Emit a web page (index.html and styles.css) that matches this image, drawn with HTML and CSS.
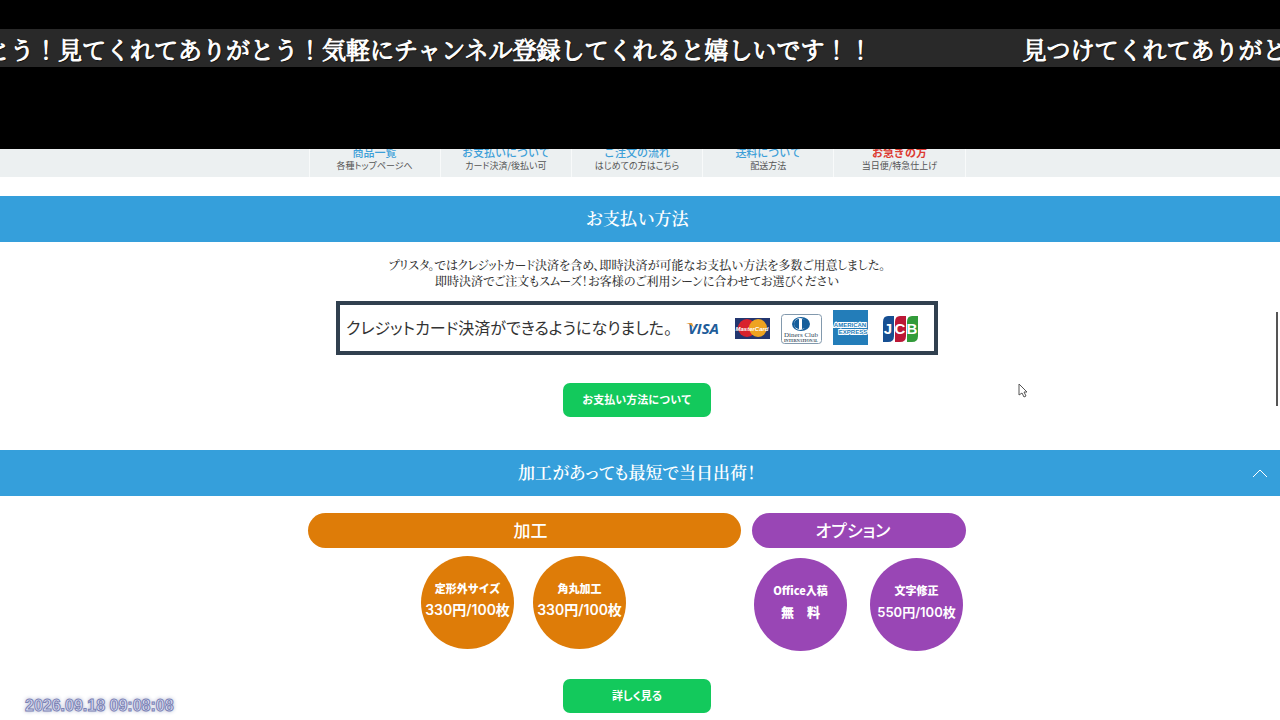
FILE: index.html
```html
<!DOCTYPE html>
<html lang="ja">
<head>
<meta charset="utf-8">
<meta name="viewport" content="width=device-width, initial-scale=1">
<title>お支払い方法</title>
<link rel="stylesheet" href="styles.css">
</head>
<body>
<header class="banner">
  <div class="ticker">
    <p class="ticker-text">見つけてくれてありがとう！見てくれてありがとう！気軽にチャンネル登録してくれると嬉しいです！！</p>
    <p class="ticker-text ticker-next">見つけてくれてありがとう！</p>
  </div>
</header>
<nav class="nav">
  <div class="nav-list">
    <a class="nav-item" href="#list"><span class="nav-title">商品一覧</span><span class="nav-sub">各種トップページへ</span></a>
    <a class="nav-item" href="#payment"><span class="nav-title">お支払いについて</span><span class="nav-sub">カード決済/後払い可</span></a>
    <a class="nav-item" href="#flow"><span class="nav-title">ご注文の流れ</span><span class="nav-sub">はじめての方はこちら</span></a>
    <a class="nav-item" href="#shipping"><span class="nav-title">送料について</span><span class="nav-sub">配送方法</span></a>
    <a class="nav-item" href="#urgent"><span class="nav-title urgent">お急ぎの方</span><span class="nav-sub">当日便/特急仕上げ</span></a>
  </div>
</nav>
<main>
  <section class="section" id="payment">
    <h2 class="band">お支払い方法</h2>
    <div class="section-body">
      <p class="lead">プリスタ。ではクレジットカード決済を含め、即時決済が可能なお支払い方法を多数ご用意しました。<br>即時決済でご注文もスムーズ！お客様のご利用シーンに合わせてお選びください</p>
      <div class="cards">
        <p class="cards-text">クレジットカード決済ができるようになりました。</p>
        <svg class="brands" viewBox="685 306 236 44" role="img" aria-label="VISA MasterCard Diners Club American Express JCB">
          <text x="688" y="334" class="logo visa">VISA</text>
          <path d="M686 323h6l2 5q-3-4-8-5z" fill="#e39b35"/>
          <rect x="735" y="318" width="35" height="21" fill="#23366f"/>
          <circle cx="747" cy="328" r="9" fill="#d8232d"/>
          <circle cx="758" cy="328" r="9" fill="#eea321"/>
          <text x="752" y="331" class="logo master">MasterCard</text>
          <rect x="781.500" y="314.500" width="40" height="29" rx="3" fill="#fff" stroke="#8299ad"/>
          <ellipse cx="801" cy="324" rx="9" ry="7" fill="#155e9b"/>
          <circle cx="800" cy="324" r="6" fill="#fff"/>
          <path d="M799 319a5 5 0 0 0 0 10z M802 319a5 5 0 0 1 0 10z" fill="#155e9b"/>
          <text x="801" y="337" class="logo diners">Diners Club</text>
          <text x="801" y="342" class="logo international">INTERNATIONAL</text>
          <rect x="833" y="310" width="35" height="35" fill="#237db9"/>
          <text x="850" y="327" class="logo amex">AMERICAN</text>
          <text x="853" y="334" class="logo amex">EXPRESS</text>
          <path d="M888 316h6v20q0 6-6 6h-5v-20q0-6 5-6z" fill="#164f92"/>
          <path d="M900 316h6v20q0 6-6 6h-5v-20q0-6 5-6z" fill="#bb1836"/>
          <path d="M912 316h6v20q0 6-6 6h-5v-20q0-6 5-6z" fill="#329b3a"/>
          <text x="888" y="334" class="logo jcb">J</text>
          <text x="900" y="334" class="logo jcb">C</text>
          <text x="912" y="334" class="logo jcb">B</text>
        </svg>
      </div>
      <a class="button" href="#payment">お支払い方法について</a>
    </div>
  </section>
  <section class="section">
    <h2 class="band">加工があっても最短で当日出荷！
      <a class="to-top" href="#" aria-label="ページ上部へ"><svg viewBox="0 0 16 10"><path d="M1 9 8 2l7 7"/></svg></a>
    </h2>
    <div class="section-body details">
      <div class="groups">
        <div class="group orange">
          <h3 class="pill">加工</h3>
          <div class="circles">
            <div class="circle"><strong>定形外サイズ</strong><span class="price">330円/100枚</span></div>
            <div class="circle"><strong>角丸加工</strong><span class="price">330円/100枚</span></div>
          </div>
        </div>
        <div class="group purple">
          <h3 class="pill">オプション</h3>
          <div class="circles">
            <div class="circle"><strong>Office入稿</strong><strong class="free">無　料</strong></div>
            <div class="circle"><strong>文字修正</strong><span class="price">550円/100枚</span></div>
          </div>
        </div>
      </div>
      <a class="button" href="#options">詳しく見る</a>
    </div>
  </section>
</main>
<div class="scroll-thumb"></div>
<time class="clock">2026.09.18 09:08:08</time>
<svg class="cursor" viewBox="0 0 10 15"><path d="M1 1v11l3-2 2 4 2-1-2-4h3z"/></svg>
</body>
</html>
```
FILE: styles.css
```css
* { box-sizing: border-box; }
body {
  margin: 0;
  height: 100vh;
  overflow: hidden;
  position: relative;
  background: #fff;
  color: #333;
  font-family: "Noto Sans CJK JP", sans-serif;
  font-feature-settings: "palt";
}
h2, h3, p { margin: 0; font-weight: 400; }
a { text-decoration: none; color: inherit; }
.banner { height: 149px; padding-top: 29px; background: #000; }
.ticker {
  display: flex;
  gap: 150px;
  height: 38px;
  overflow: hidden;
  background: #292929;
  color: #fff;
  font: 700 24px/40px "Noto Serif CJK JP", "Noto Sans CJK JP", serif;
  font-feature-settings: normal;
  -webkit-text-stroke: 1px #fff;
  text-shadow: 1px 1px 1px #000;
}
.ticker-text { flex: none; white-space: nowrap; }
.ticker-text:first-child { margin-left: -254px; }
.nav { height: 28px; padding-right: 6px; background: #ecf0f1; overflow: hidden; }
.nav-list {
  display: flex;
  width: 657px;
  height: 100%;
  margin: 0 auto;
  border-left: 1px solid #f8fafa;
}
.nav-item {
  flex: 1;
  display: flex;
  flex-direction: column;
  justify-content: flex-end;
  align-items: center;
  padding-bottom: 5px;
  border-right: 1px solid #f8fafa;
  white-space: nowrap;
}
.nav-title { color: #3d9fd8; font-size: 11px; line-height: 13px; font-weight: 500; font-feature-settings: normal; }
.nav-title.urgent { color: #dc3a31; font-weight: 700; }
.nav-sub { color: #555; font-size: 9px; line-height: 13px; }
.section:first-child { padding-top: 19px; }
.band {
  position: relative;
  height: 46px;
  padding-right: 6px;
  background: #359fdb;
  color: #fff;
  font: 600 17px/44px "Noto Serif CJK JP", "Noto Sans CJK JP", serif;
  font-feature-settings: "palt";
  text-align: center;
}
.section-body {
  display: flex;
  flex-direction: column;
  align-items: center;
  padding: 15px 6px 33px 0;
}
.lead {
  font: 500 12px/16px "Noto Serif CJK JP", "Noto Sans CJK JP", serif;
  font-feature-settings: "palt";
  text-align: center;
}
.cards {
  display: flex;
  align-items: center;
  justify-content: space-between;
  width: 602px;
  height: 54px;
  margin: 12px 0 28px;
  padding: 0 13px 0 6px;
  border: 4px solid #31404f;
}
.cards-text { font-size: 16px; line-height: 24px; padding-bottom: 2px; white-space: nowrap; }
.brands { width: 236px; height: 44px; }
.logo { font-family: "Liberation Sans", sans-serif; font-weight: 700; font-style: italic; text-anchor: middle; }
.visa { font-family: "Open Sans", sans-serif; font-size: 15px; fill: #205c99; text-anchor: start; }
.master { font-size: 6px; fill: #fff; }
.diners { font: 400 7px "Liberation Serif", serif; fill: #31485a; }
.international { font: 700 4px "Liberation Serif", serif; fill: #31485a; }
.amex { font-size: 6px; font-style: normal; fill: #237db9; stroke: #fff; stroke-width: 2px; paint-order: stroke; }
.jcb { font-size: 15px; font-style: normal; fill: #fff; }
.button {
  width: 148px;
  height: 34px;
  border-radius: 7px;
  background: #13c95c;
  color: #fff;
  font-size: 11px;
  line-height: 33px;
  font-weight: 700;
  font-feature-settings: normal;
  text-align: center;
}
.details .button { font-feature-settings: "palt"; }
.to-top { position: absolute; right: 12px; top: 18px; display: flex; }
.to-top svg { width: 16px; height: 10px; fill: none; stroke: #fff; }
.details { padding-top: 17px; }
.groups {
  display: grid;
  grid-template-columns: 433px 214px;
  gap: 11px;
  margin-bottom: 28px;
}
.pill { height: 35px; border-radius: 18px; color: #fff; font-size: 17px; line-height: 34px; font-weight: 500; text-align: center; }
.orange .pill { padding-left: 12px; }
.purple .pill { padding-right: 12px; }
.orange .pill, .orange .circle { background: #de7c08; }
.purple .pill, .purple .circle { background: #9946b5; }
.circles { display: flex; }
.orange .circles { gap: 19px; padding: 8px 0 0 113px; }
.purple .circles { gap: 23px; padding: 10px 0 0 2px; }
.circle {
  display: flex;
  flex-direction: column;
  align-items: center;
  gap: 2px;
  width: 93px;
  height: 93px;
  padding-top: 22px;
  border-radius: 50%;
  color: #fff;
  font-size: 11px;
  line-height: 20px;
  font-feature-settings: normal;
  white-space: nowrap;
}
.circle strong { font-weight: 900; }
.price { font-family: Inter, "Noto Sans CJK JP", sans-serif; font-size: 13px; font-weight: 600; }
.orange .price { font-size: 14px; }
.circle .free { font-size: 13px; }
.scroll-thumb { position: absolute; right: 2px; top: 312px; width: 2px; height: 94px; background: #555; }
.clock {
  position: absolute;
  left: 25px;
  bottom: 5px;
  color: #e4e7fa;
  font: 700 16px/18px "Liberation Sans", sans-serif;
  -webkit-text-stroke: 1px #7b82b5;
  text-shadow: 0 0 4px #8b91b8;
}
.cursor { position: absolute; left: 1018px; top: 383px; width: 10px; height: 15px; fill: #fff; stroke: #555; }
```
